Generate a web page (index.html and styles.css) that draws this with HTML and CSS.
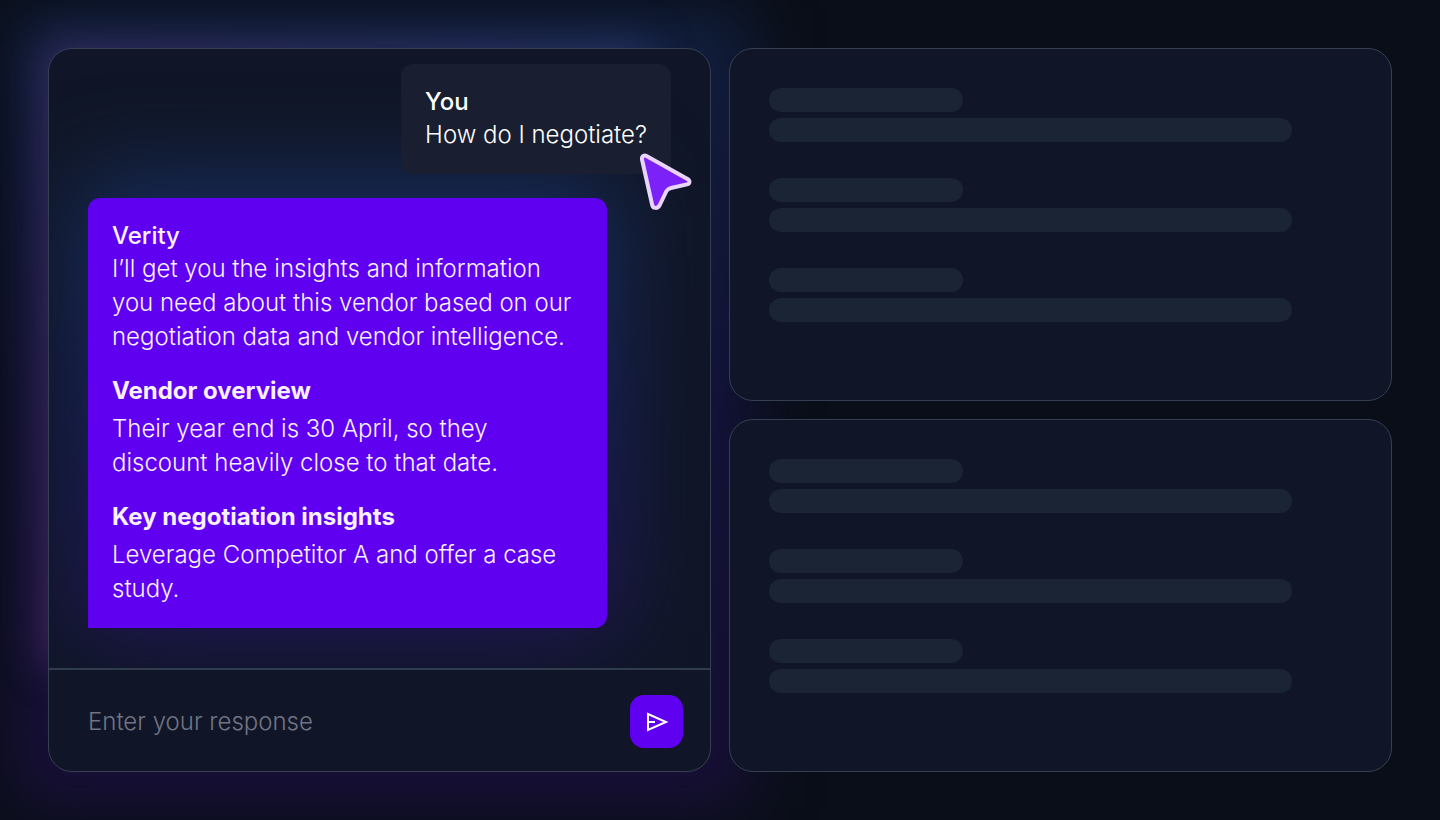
FILE: index.html
```html
<!DOCTYPE html>
<html lang="en">
<head>
    <meta charset="UTF-8">
    <meta name="viewport" content="width=device-width, initial-scale=1.0">
    <title>Verity</title>
    <link rel="stylesheet" href="styles.css">
</head>
<body>
    <main class="board">
        <section class="card chat">
            <div class="messages">
                <article class="bubble bubble-user">
                    <h2 class="name">You</h2>
                    <p>How do I negotiate?</p>
                    <svg class="cursor" width="54" height="60" viewBox="0 0 54 60" aria-hidden="true">
                        <path d="M3 8.500C2.500 5.500 5 3.700 7.500 5.100L48.500 28C51.300 29.700 51 32.700 48 33.400L32 37Q29 37.700 27.500 40L20.500 54.500C18.500 58 14 57.500 13.200 54Z"/>
                    </svg>
                </article>
                <article class="bubble bubble-verity">
                    <h2 class="name">Verity</h2>
                    <p>I’ll get you the insights and information you need about this vendor based on our negotiation data and vendor intelligence.</p>
                    <h3>Vendor overview</h3>
                    <p>Their year end is 30 April, so they discount heavily close to that date.</p>
                    <h3>Key negotiation insights</h3>
                    <p>Leverage Competitor A and offer a case study.</p>
                </article>
            </div>
            <form class="composer">
                <input type="text" class="response" aria-label="Enter your response" placeholder="Enter your response">
                <button type="button" class="send" aria-label="Send">
                    <svg width="24" height="24" viewBox="0 0 24 24" aria-hidden="true">
                        <path d="M3 4L21 12L3 20ZM3 12H10"/>
                    </svg>
                </button>
            </form>
        </section>

        <section class="card panel">
            <div class="skeleton"><span class="bar short"></span><span class="bar"></span></div>
            <div class="skeleton"><span class="bar short"></span><span class="bar"></span></div>
            <div class="skeleton"><span class="bar short"></span><span class="bar"></span></div>
        </section>

        <section class="card panel">
            <div class="skeleton"><span class="bar short"></span><span class="bar"></span></div>
            <div class="skeleton"><span class="bar short"></span><span class="bar"></span></div>
            <div class="skeleton"><span class="bar short"></span><span class="bar"></span></div>
        </section>
    </main>
</body>
</html>
```
FILE: styles.css
```css
* {
    box-sizing: border-box;
}

body {
    margin: 0;
    font-family: Inter, "Liberation Sans", sans-serif;
    font-size: 24px;
    font-weight: 300;
    line-height: 34px;
    color: #fff;
    background-color: #0a0e18;
}

h2, h3, p {
    margin: 0;
}

.board {
    display: grid;
    grid-template-columns: 1fr 1fr;
    grid-template-rows: 1fr 1fr;
    gap: 18px;
    min-height: 100vh;
    padding: 48px;
    overflow: hidden;
    isolation: isolate;
}

.card {
    border: 1px solid #344052;
    border-radius: 24px;
    background-color: #101627;
}

.chat {
    position: relative;
    display: flex;
    flex-direction: column;
    grid-row: span 2;
}

/* coloured light behind the chat card */
.chat::before,
.chat::after {
    content: "";
    position: absolute;
    z-index: -1;
}

.chat::before {
    inset: -40px -40px -36px -36px;
    background: linear-gradient(#11203f, #14133c 50%, #180f38);
    filter: blur(32px);
    z-index: -2;
}

.chat::after {
    inset: -4px 60px 106px -4px;
    background: linear-gradient(to bottom left, #283666, #352d62 50%, #44265e);
    filter: blur(20px);
}

.messages {
    display: flex;
    flex: 1;
    flex-direction: column;
    gap: 24px;
    padding: 15px 39px 40px;
    border-radius: 23px 23px 0 0;
    overflow: hidden;
    isolation: isolate;
}

.bubble {
    position: relative;
    padding: 21px 24px 22px;
    border-radius: 12px;
}

.bubble-user {
    align-self: flex-end;
    background-color: #191f30;
}

.bubble-verity {
    width: 89%;
    border-bottom-left-radius: 0;
    color: #f8f0ff;
    background-color: #6000f0;
}

.bubble-verity::before {
    content: "";
    position: absolute;
    inset: -16px -8px -4px;
    z-index: -1;
    background: linear-gradient(#173060, #1a2260 50%, #22145a);
    filter: blur(46px);
}

.name {
    font-size: 24px;
    font-weight: 500;
    line-height: 33px;
}

.bubble h3 {
    margin: 20px 0 4px;
    font-size: 24px;
    font-weight: 700;
}

.cursor {
    position: absolute;
    right: -22px;
    bottom: -37px;
    fill: #7c22f8;
    stroke: #e9d5fb;
    stroke-width: 4;
    stroke-linejoin: round;
}

.composer {
    display: flex;
    align-items: center;
    gap: 24px;
    padding: 25px 27px 23px 39px;
    border-top: 2px solid #303c4e;
}

.response {
    flex: 1;
    min-width: 0;
    padding: 0;
    border: 0;
    outline: 0;
    font: inherit;
    color: #fff;
    background: none;
}

.response::placeholder {
    color: #707585;
    opacity: 1;
}

.send {
    display: flex;
    align-items: center;
    justify-content: center;
    width: 53px;
    height: 53px;
    padding: 0;
    border: 0;
    border-radius: 14px;
    background-color: #6000f0;
    cursor: pointer;
}

.send svg {
    fill: none;
    stroke: #fff;
    stroke-width: 2;
}

.panel {
    display: flex;
    flex-direction: column;
    gap: 36px;
    padding: 39px 41px 39px 39px;
}

.skeleton {
    display: flex;
    flex-direction: column;
    gap: 6px;
}

.bar {
    width: 90%;
    height: 24px;
    border-radius: 12px;
    background-color: #1b2435;
}

.bar.short {
    width: calc(100% / 3);
}
```
